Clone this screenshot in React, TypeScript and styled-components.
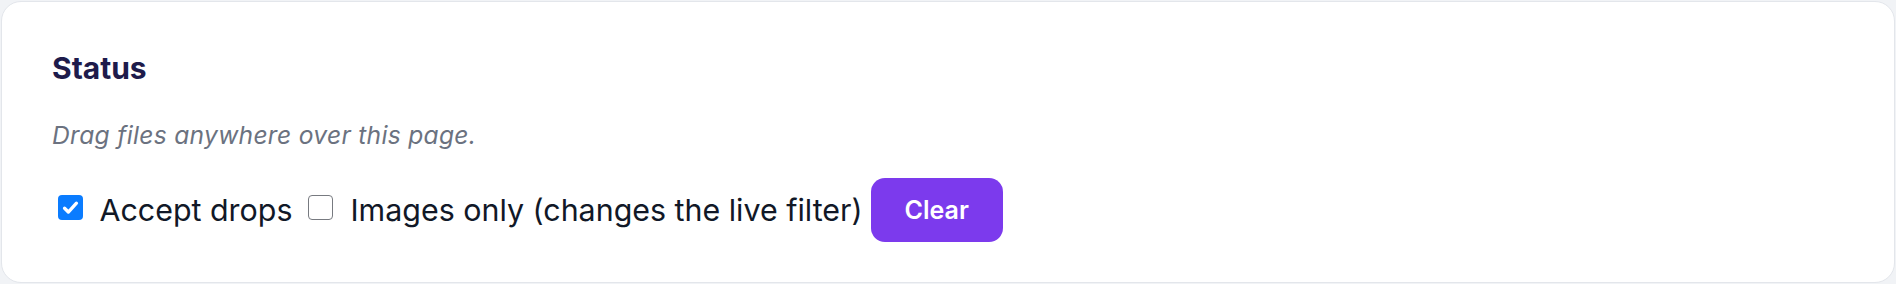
import React, { useState } from 'react';
import styled, { createGlobalStyle } from 'styled-components';

const GlobalStyle = createGlobalStyle`
  html, body {
    margin: 0;
    padding: 0;
    background: #f1f3f6;
    font-family: Inter, "Noto Sans", sans-serif;
  }
  #root {
    padding: 1px;
  }
`;

const Card = styled.section`
  box-sizing: border-box;
  height: 282px;
  background: #ffffff;
  border: 1.5px solid #e3e6eb;
  border-radius: 20px;
  padding: 48px 50px 38px;
  display: flex;
  flex-direction: column;
`;

const Title = styled.h2`
  margin: 0;
  font-size: 30px;
  line-height: 36px;
  font-weight: 700;
  color: #1e1b4b;
`;

const Hint = styled.p`
  margin: 33px 0 0;
  font-size: 24.6px;
  line-height: 32px;
  font-style: italic;
  letter-spacing: 0.3px;
  color: #6b7280;
`;

const Controls = styled.div`
  display: flex;
  align-items: center;
  margin-top: 27px;
`;

const Option = styled.label`
  display: flex;
  align-items: center;
  gap: 17px;
  margin-left: 5.5px;
  margin-right: 8px;
  font-size: 30.4px;
  line-height: 36px;
  color: #111827;
  cursor: pointer;

  & + & {
    margin-left: 8px;
  }
`;

const Box = styled.span<{ $checked: boolean }>`
  box-sizing: border-box;
  width: 25px;
  height: 25px;
  margin-top: -6px;
  border-radius: 4px;
  display: inline-flex;
  align-items: center;
  justify-content: center;
  background: ${(p) => (p.$checked ? '#0a7cff' : '#ffffff')};
  border: ${(p) => (p.$checked ? 'none' : '1.5px solid #777a80')};
  flex-shrink: 0;
`;

const Button = styled.button`
  height: 64px;
  padding: 0 34px;
  border: none;
  border-radius: 14px;
  background: #7c3aed;
  color: #ffffff;
  font-family: Inter, "Noto Sans", sans-serif;
  font-size: 25px;
  font-weight: 600;
  cursor: pointer;
`;

const Checkbox = ({ checked, label, onToggle }: { checked: boolean; label: string; onToggle: () => void }) => (
  <Option onClick={onToggle}>
    <Box $checked={checked}>
      {checked && (
        <svg width="19" height="19" viewBox="0 0 16 16" fill="none">
          <path d="M3 8.6l3.2 3.2L13 4.4" stroke="#fff" strokeWidth="2.8" strokeLinecap="round" strokeLinejoin="round" />
        </svg>
      )}
    </Box>
    {label}
  </Option>
);

export default function App() {
  const [accept, setAccept] = useState(true);
  const [images, setImages] = useState(false);

  return (
    <>
      <GlobalStyle />
      <Card>
        <Title>Status</Title>
        <Hint>Drag files anywhere over this page.</Hint>
        <Controls>
          <Checkbox checked={accept} label="Accept drops" onToggle={() => setAccept(!accept)} />
          <Checkbox checked={images} label="Images only (changes the live filter)" onToggle={() => setImages(!images)} />
          <Button>Clear</Button>
        </Controls>
      </Card>
    </>
  );
}
